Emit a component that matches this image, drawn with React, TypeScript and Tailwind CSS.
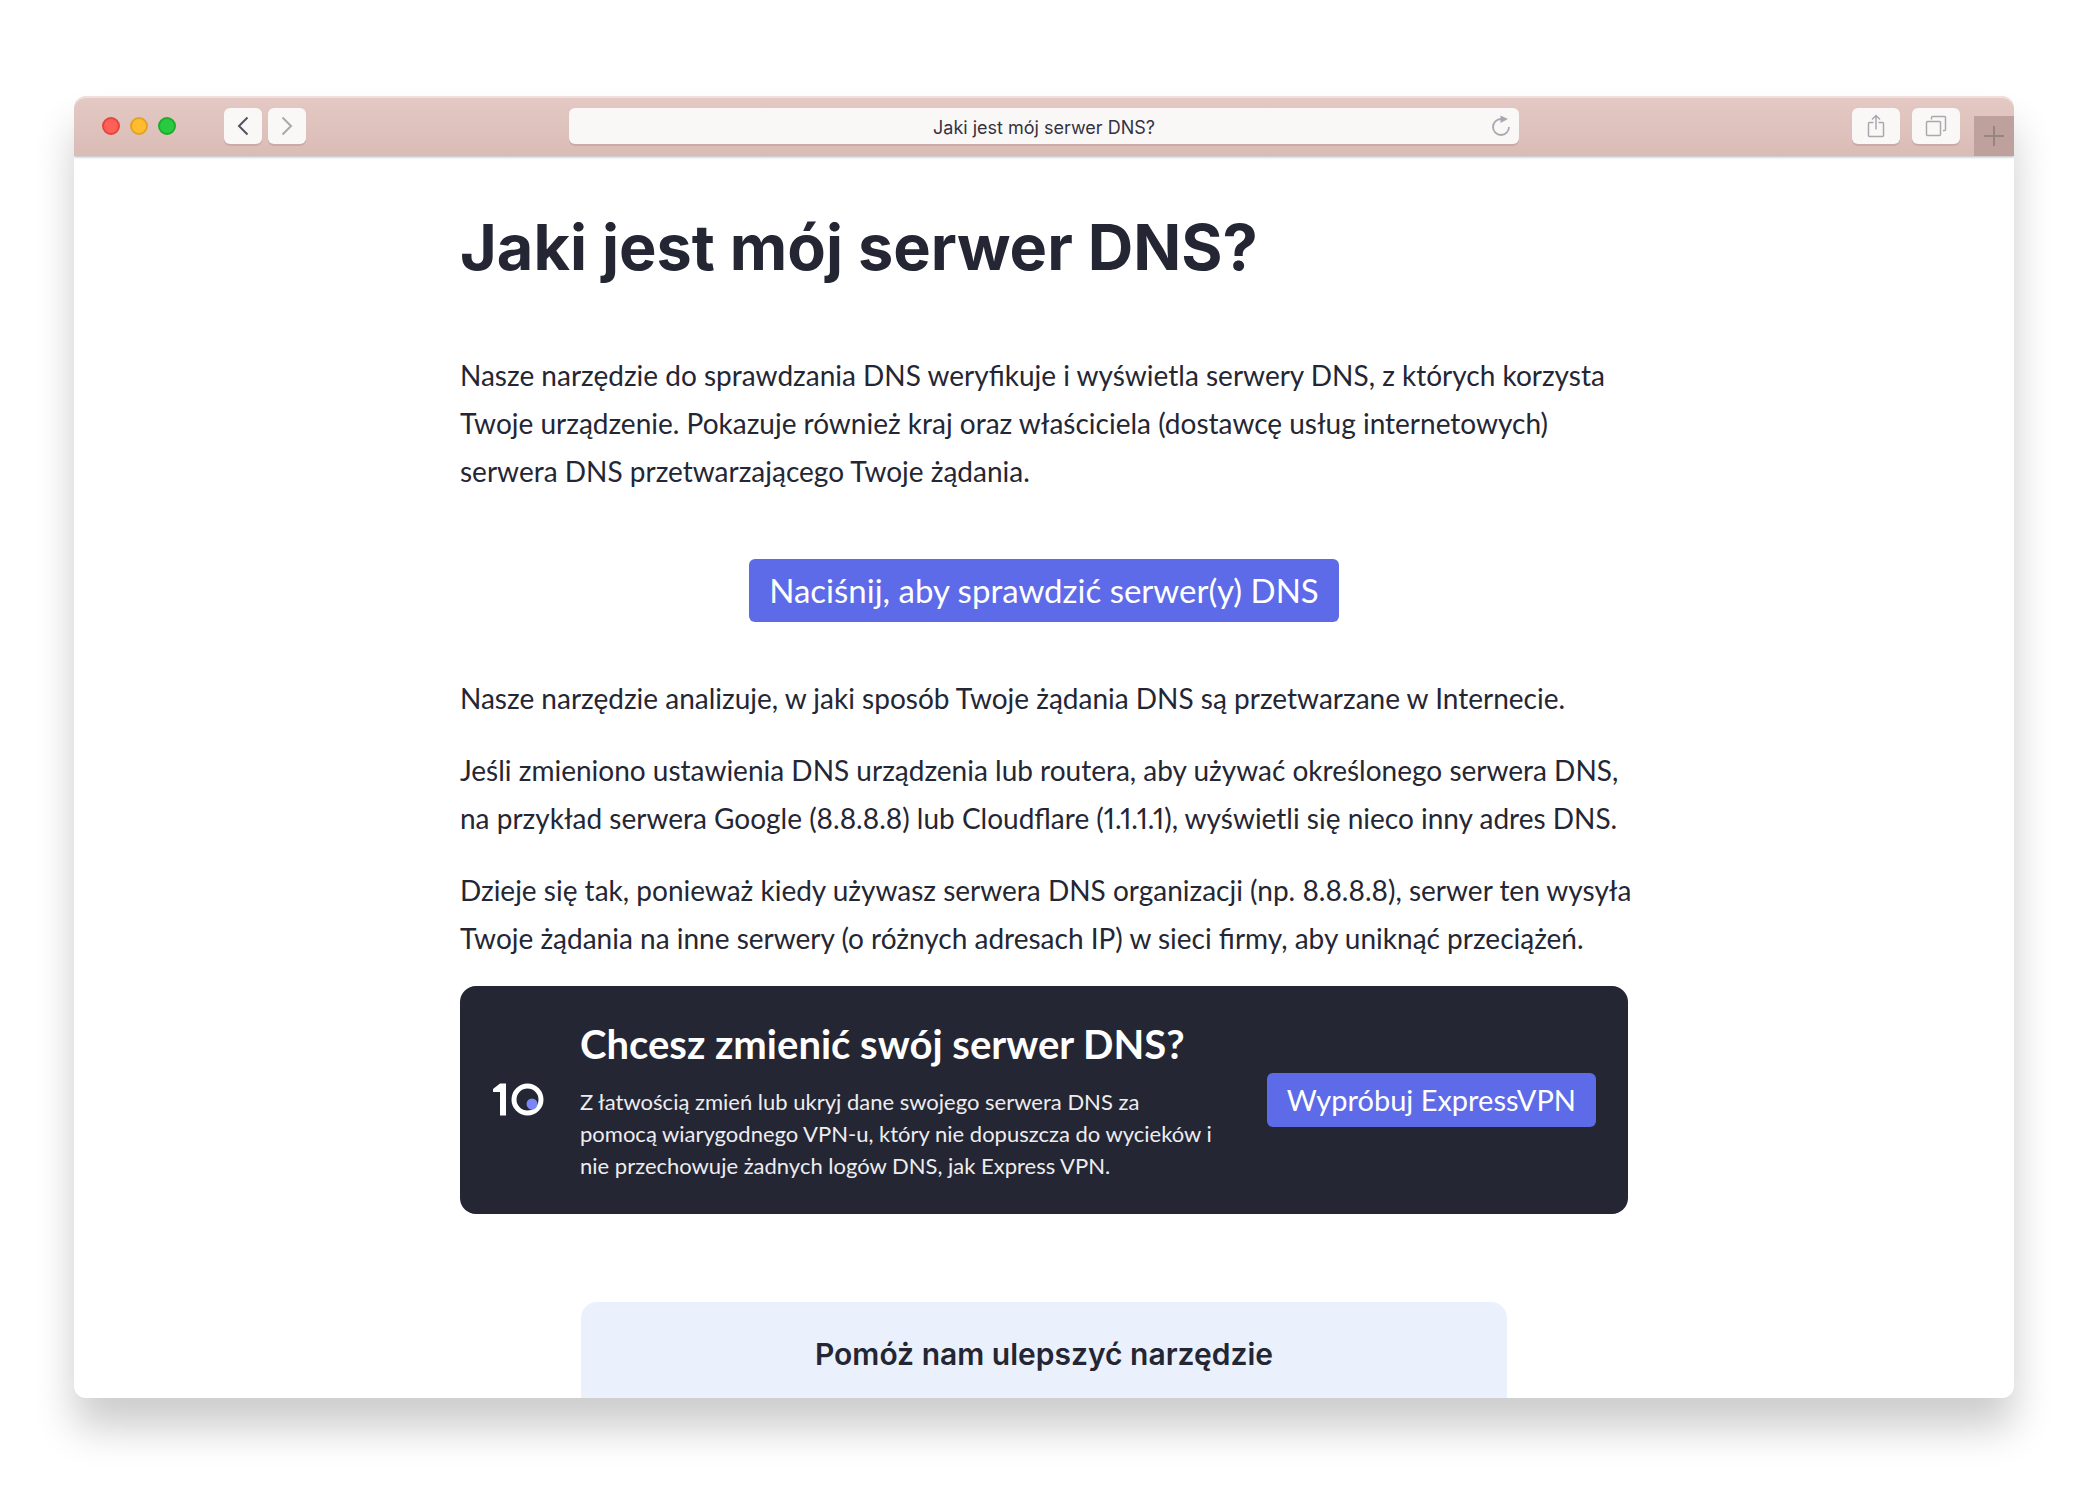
import type { ReactNode } from "react";

function ToolbarButton({ label, className, children }: { label: string; className: string; children: ReactNode }) {
  return (
    <button
      type="button"
      aria-label={label}
      className={`flex h-9 items-center justify-center rounded-md bg-[#faf8f7] shadow-[0_2px_0_#cbaba6] ${className}`}
    >
      {children}
    </button>
  );
}

function Toolbar() {
  return (
    <header className="relative grid h-15 grid-cols-[1fr_49%_1fr] items-center rounded-t-xl bg-linear-to-b from-[#e4c9c4] to-[#dabcb6] font-['Inter',sans-serif] shadow-[inset_0_2px_0_#f0dfdc,0_1px_3px_rgba(60,70,70,0.4)]">
      <div className="flex items-center pl-7">
        <div className="flex gap-2.5">
          <span className="size-[18px] rounded-full border-2 border-[#e2463f] bg-[#ff5f57]" />
          <span className="size-[18px] rounded-full border-2 border-[#e1a325] bg-[#ffbd2e]" />
          <span className="size-[18px] rounded-full border-2 border-[#1dad2b] bg-[#28ca41]" />
        </div>
        <div className="ml-12 flex gap-1.5">
          <ToolbarButton label="Wstecz" className="w-[38px]">
            <svg width="12" height="20" viewBox="0 0 12 20" fill="none" stroke="#55535f" strokeWidth="2">
              <path d="M10.5 1.5 2 10l8.5 8.5" />
            </svg>
          </ToolbarButton>
          <ToolbarButton label="Dalej" className="w-[38px]">
            <svg width="12" height="20" viewBox="0 0 12 20" fill="none" stroke="#a9a8ae" strokeWidth="2">
              <path d="M1.5 1.5 10 10l-8.5 8.5" />
            </svg>
          </ToolbarButton>
        </div>
      </div>

      <div className="flex h-9 items-center rounded-md bg-[#faf8f7] px-2 shadow-[0_2px_0_#cbaba6]">
        <input
          type="text"
          readOnly
          aria-label="Adres"
          value="Jaki jest mój serwer DNS?"
          className="min-w-0 flex-1 pt-1 pl-5 text-center text-lg text-[#33323f] outline-none"
        />
        <button type="button" aria-label="Odśwież">
          <svg width="20" height="22" viewBox="0 0 20 22" fill="none">
            <path d="M10 4a8 8 0 1 0 8 8" stroke="#a9a8ae" strokeWidth="1.8" />
            <path d="M9.5 0.5 17 4 9.5 8Z" fill="#a9a8ae" />
          </svg>
        </button>
      </div>

      <div className="flex h-full items-center justify-end">
        <ToolbarButton label="Udostępnij" className="w-12">
          <svg width="18" height="26" viewBox="0 0 18 26" fill="none" stroke="#a9a8ae" strokeWidth="1.5">
            <path d="M6.5 9.5h-4a1 1 0 0 0-1 1v12a1 1 0 0 0 1 1h13a1 1 0 0 0 1-1v-12a1 1 0 0 0-1-1h-4M9 16.5v-14M5 6.5l4-4 4 4" />
          </svg>
        </ToolbarButton>
        <ToolbarButton label="Karty" className="ml-3 w-12">
          <svg width="22" height="22" viewBox="0 0 22 22" fill="none" stroke="#a9a8ae" strokeWidth="1.5">
            <rect x="1.5" y="6.5" width="14" height="14" rx="1" />
            <path d="M6.5 4.5v-2a1 1 0 0 1 1-1h12a1 1 0 0 1 1 1v12a1 1 0 0 1-1 1H18" />
          </svg>
        </ToolbarButton>
        <button
          type="button"
          aria-label="Nowa karta"
          className="ml-3.5 flex size-10 items-center justify-center self-end bg-[#bea19c]"
        >
          <svg width="20" height="20" viewBox="0 0 20 20" fill="none" stroke="#988582" strokeWidth="2">
            <path d="M10 0v20M0 10h20" />
          </svg>
        </button>
      </div>
    </header>
  );
}

function Logo() {
  return (
    <svg width="52" height="36" viewBox="0 0 52 36" role="img" aria-label="top10vpn" className="shrink-0">
      <path d="M8 1.5h6v32H8V10H1V7Z" fill="#fff" />
      <circle cx="35.5" cy="17.5" r="13.5" fill="none" stroke="#fff" strokeWidth="5" />
      <circle cx="40" cy="22" r="5.5" fill="#7b86f5" />
    </svg>
  );
}

function ChangeDnsBanner() {
  return (
    <aside className="mt-6 flex items-center rounded-2xl bg-[#252634] p-8 text-white">
      <Logo />
      <div className="ml-9 flex-1">
        <h2 className="text-[40px] leading-[52px] font-bold">Chcesz zmienić swój serwer DNS?</h2>
        <p className="mt-4 text-[22px] leading-8 text-[#ededf0]">
          Z łatwością zmień lub ukryj dane swojego serwera DNS za
          <br />
          pomocą wiarygodnego VPN-u, który nie dopuszcza do wycieków i
          <br />
          nie przechowuje żadnych logów DNS, jak Express VPN.
        </p>
      </div>
      <a href="#expressvpn" className="ml-8 rounded-md bg-[#5d6be8] px-5 py-2 text-[29px] leading-[38px] whitespace-nowrap">
        Wypróbuj ExpressVPN
      </a>
    </aside>
  );
}

export default function App() {
  return (
    <div className="bg-white pt-24 pr-[76px] pb-24 pl-[74px] font-['Lato',sans-serif] text-[#252634]">
      <div className="overflow-hidden rounded-xl bg-white shadow-[0_30px_40px_rgba(0,0,0,0.2)]">
        <Toolbar />
        <main className="mx-auto max-w-[1168px] text-[28px] leading-12 proportional-nums">
          <h1 className="pt-12 font-['Inter',sans-serif] text-[63px] leading-[87px] font-bold">
            Jaki jest mój serwer DNS?
          </h1>
          <p className="mt-15">
            Nasze narzędzie do sprawdzania DNS weryfikuje i wyświetla serwery DNS, z których korzysta Twoje urządzenie.
            Pokazuje również kraj oraz właściciela (dostawcę usług internetowych) serwera DNS przetwarzającego Twoje
            żądania.
          </p>
          <div className="mt-16 mb-13 flex justify-center">
            <button type="button" className="rounded-md bg-[#5d6be8] px-5 py-2 text-[33px] leading-[47px] text-white">
              Naciśnij, aby sprawdzić serwer(y) DNS
            </button>
          </div>
          <div className="-mr-4 space-y-6">
            <p>Nasze narzędzie analizuje, w jaki sposób Twoje żądania DNS są przetwarzane w Internecie.</p>
            <p>
              Jeśli zmieniono ustawienia DNS urządzenia lub routera, aby używać określonego serwera DNS, na przykład
              serwera Google (8.8.8.8) lub Cloudflare (1.1.1.1), wyświetli się nieco inny adres DNS.
            </p>
            <p>
              Dzieje się tak, ponieważ kiedy używasz serwera DNS organizacji (np. 8.8.8.8), serwer ten wysyła Twoje
              żądania na inne serwery (o różnych adresach IP) w sieci firmy, aby uniknąć przeciążeń.
            </p>
          </div>
          <ChangeDnsBanner />
          <section className="mx-auto mt-22 max-w-[926px] rounded-t-2xl bg-[#eaf1fc] pt-7 pb-5 text-center">
            <h2 className="font-['Inter',sans-serif] text-[30px] leading-12 font-semibold">
              Pomóż nam ulepszyć narzędzie
            </h2>
          </section>
        </main>
      </div>
    </div>
  );
}
